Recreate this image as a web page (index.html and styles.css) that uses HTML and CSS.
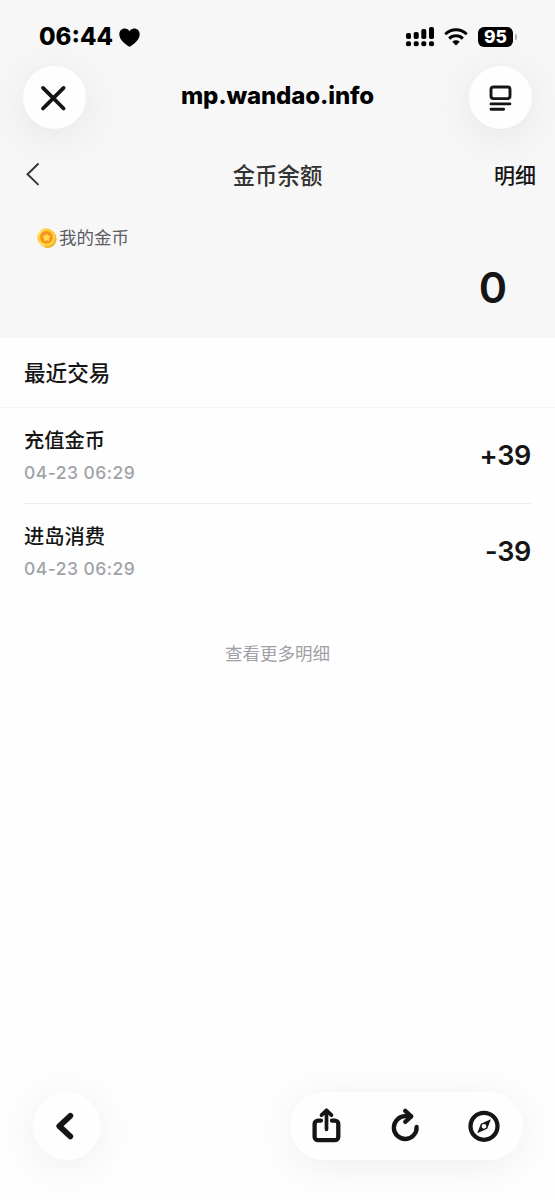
FILE: index.html
```html
<!DOCTYPE html>
<html lang="zh-CN">
<head>
    <meta charset="UTF-8" />
    <meta name="viewport" content="width=device-width, initial-scale=1" />
    <title>金币余额</title>
    <link rel="stylesheet" href="styles.css">
</head>
<body>

    <header class="top">
        <div class="status-bar">
            <div class="status-left">
                <span class="time">06:44</span>
                <svg class="heart" width="21" height="19" viewBox="0 0 21 19"><path d="M10.500 18.700C7 16.800.3 12 .3 6.200.3 2.700 2.700.4 5.600.4c2.100 0 3.900 1 4.900 2.800C11.500 1.400 13.300.4 15.400.4c2.900 0 5.300 2.300 5.300 5.800 0 5.800-6.700 10.600-10.200 12.500z"/></svg>
            </div>
            <div class="status-right">
                <svg class="signal" width="29" height="20" viewBox="0 0 29 20">
                    <rect x="0" y="6" width="5" height="6" rx="1.800"/>
                    <rect x="7.700" y="5" width="5" height="7" rx="1.800"/>
                    <rect x="15.300" y="2" width="5" height="10" rx="1.800"/>
                    <rect x="23" y="0" width="5" height="12" rx="1.800"/>
                    <rect x="0" y="14.200" width="5" height="5" rx="1.800"/>
                    <rect x="7.700" y="14.200" width="5" height="5" rx="1.800"/>
                    <rect x="15.300" y="14.200" width="5" height="5" rx="1.800"/>
                    <rect x="23" y="14.200" width="5" height="5" rx="1.800"/>
                </svg>
                <svg class="wifi" width="24" height="18" viewBox="0 0 24 18">
                    <path class="wifi-arc" d="M1.300 6.200a15.300 15.300 0 0 1 21.400 0M5.200 10.600a9.700 9.700 0 0 1 13.600 0"/>
                    <path d="M12 17.500 8.300 13.700a5.400 5.400 0 0 1 7.400 0z"/>
                </svg>
                <div class="battery"><span class="battery-level">95</span><span class="battery-tip"></span></div>
            </div>
        </div>

        <div class="browser-bar">
            <button class="round-btn">
                <svg width="28" height="26" viewBox="0 0 28 26"><path class="line close" d="M2 2.900l20.600 20.600M22.600 2.900 2 23.500"/></svg>
            </button>
            <span class="domain">mp.wandao.info</span>
            <button class="round-btn">
                <svg width="24" height="26" viewBox="0 0 24 26"><rect class="line page" x="3" y="2" width="19" height="11.600" rx="2.500"/><path class="line page" d="M3 18.900h18.900M3 24.300h12.600"/></svg>
            </button>
        </div>

        <div class="page-bar">
            <svg class="back" width="14" height="24" viewBox="0 0 14 24"><path d="M12.500 1.500 1.500 12.200l11 10.700"/></svg>
            <h1 class="page-title">金币余额</h1>
            <a class="detail">明细</a>
        </div>

        <section class="balance">
            <div class="balance-label">
                <svg class="coin" width="20" height="20" viewBox="0 0 20 20">
                    <circle cx="10.600" cy="10.900" r="9" fill="#e9ac1c"/>
                    <circle cx="9.400" cy="9.400" r="9.200" fill="#ffcf3a"/>
                    <circle cx="9.400" cy="9.200" r="6.300" fill="#f7931e"/>
                    <path d="M9.500 5.500l1.500 2 2.600.7-1.700 2.200.2 2.800-2.600-1-2.600 1 .2-2.800L5.400 8.200 8 7.500z" fill="#ffdc4e"/>
                    <path d="M2 14.500 7.500 18.500M1 7.500 5.500 1.300" stroke="#ffe88a" stroke-width="1.200" fill="none"/>
                </svg>
                <span>我的金币</span>
            </div>
            <div class="balance-value">0</div>
        </section>
    </header>

    <main class="records">
        <h2 class="records-title">最近交易</h2>
        <ul class="record-list">
            <li class="record">
                <div>
                    <div class="record-name">充值金币</div>
                    <div class="record-time">04-23 06:29</div>
                </div>
                <div class="record-amount">+39</div>
            </li>
            <li class="record">
                <div>
                    <div class="record-name">进岛消费</div>
                    <div class="record-time">04-23 06:29</div>
                </div>
                <div class="record-amount">-39</div>
            </li>
        </ul>
        <a class="more">查看更多明细</a>
    </main>

    <footer class="toolbar">
        <button class="tool-back">
            <svg width="22" height="28" viewBox="0 0 22 28"><path class="line bold" d="M14.300 3.800 3.300 14.100l11 10.300"/></svg>
        </button>
        <div class="tool-group">
            <svg width="28" height="36" viewBox="0 0 28 36">
                <path class="line tool" d="M8 12.600H5.100A3.500 3.500 0 0 0 1.600 16.100V28.700A3.500 3.500 0 0 0 5.100 32.200H21.800A3.500 3.500 0 0 0 25.300 28.700V16.100A3.500 3.500 0 0 0 21.800 12.600H18.900"/>
                <path class="line arrow" d="M13.500 21.300V2.500M8.500 7.100l5-4.900 5 4.900"/>
            </svg>
            <svg width="28" height="36" viewBox="0 0 28 36">
                <path class="line tool" d="M25.600 18.800A11.400 11.400 0 1 1 14.200 8.200H20"/>
                <path class="line tool" d="M14.200 2.900 20.300 8.300 14.200 13.900"/>
            </svg>
            <svg width="32" height="36" viewBox="0 0 32 36">
                <circle class="line tool" cx="16" cy="18.300" r="13.500"/>
                <path class="needle" fill-rule="evenodd" d="M22.900 11.200 19.200 20.700 9.200 25.200 12.900 15.700zM16 15.900a2.400 2.400 0 1 0 0 4.800 2.400 2.400 0 0 0 0-4.800z"/>
            </svg>
        </div>
    </footer>

</body>
</html>
```
FILE: styles.css
```css
* {
    box-sizing: border-box;
}
body {
    margin: 0;
    height: 1200px;
    display: flex;
    flex-direction: column;
    overflow: hidden;
    background: #fefefe;
    color: #151515;
    font-family: Inter, "Noto Sans CJK SC", sans-serif;
    font-weight: 500;
}
h1, h2, ul {
    margin: 0;
    padding: 0;
    font-weight: 500;
}
svg {
    display: block;
    flex: none;
    overflow: visible;
}
button {
    border: 0;
    padding: 0;
    display: flex;
    align-items: center;
    justify-content: center;
    border-radius: 50%;
    background: #fefefe;
}
.line {
    fill: none;
    stroke: #151515;
    stroke-linecap: round;
    stroke-linejoin: round;
}
.close {
    stroke-width: 3.8;
}
.page {
    stroke-width: 2.9;
}
.bold {
    stroke-width: 5.8;
}
.tool {
    stroke-width: 4.3;
}
.arrow {
    stroke-width: 3.7;
}

/* 顶部 */
.top {
    height: 338px;
    background: #f7f7f7;
    overflow: hidden;
}
.status-bar {
    height: 66px;
    padding: 8px 37px 0 39px;
    display: flex;
    align-items: center;
    justify-content: space-between;
    color: #000;
}
.status-left, .status-right {
    display: flex;
    align-items: center;
}
.time {
    font-size: 24px;
    font-weight: 800;
    line-height: 30px;
}
.heart {
    margin-left: 6px;
}
.wifi {
    margin-left: 9px;
}
.wifi-arc {
    fill: none;
    stroke: #000;
    stroke-width: 3;
}
.status-right {
    margin-right: 1px;
}
.battery {
    margin-left: 10px;
    display: flex;
    align-items: center;
}
.battery-level {
    width: 35px;
    height: 20px;
    border-radius: 6px;
    background: #000;
    color: #fff;
    font-size: 17.5px;
    font-weight: 800;
    line-height: 20px;
    text-align: center;
}
.battery-tip {
    width: 2px;
    height: 6px;
    margin-left: 2px;
    border-radius: 0 2px 2px 0;
    background: #b0b0b0;
}
.browser-bar {
    height: 63px;
    padding: 0 23px;
    display: flex;
    justify-content: space-between;
}
.round-btn {
    width: 63px;
    height: 63px;
    box-shadow: 0 8px 44px rgba(0, 0, 0, 0.08);
}
.domain {
    color: #000;
    font-size: 24px;
    font-weight: 800;
    line-height: 60px;
    letter-spacing: -0.15px;
}
.page-bar {
    height: 90px;
    padding: 0 19px 0 26px;
    display: grid;
    grid-template-columns: 64px 1fr 71px;
    align-items: center;
}
.back {
    fill: none;
    stroke: #333;
    stroke-width: 1.9;
}
.page-title {
    font-size: 22.4px;
    color: #333;
    text-align: center;
}
.detail {
    font-size: 21px;
    text-align: right;
}
.balance {
    padding: 6px 48px 0 37px;
}
.balance-label {
    display: flex;
    align-items: center;
    gap: 2px;
    height: 26px;
    font-size: 17.5px;
    line-height: 22px;
    font-weight: 400;
    color: #5d5d66;
}
.balance-label span {
    padding-bottom: 1px;
}
.balance-value {
    height: 72px;
    line-height: 72px;
    text-align: right;
    font-size: 43px;
    font-weight: 600;
}

/* 交易记录 */
.records {
    flex: 1;
    text-align: center;
}
.records-title {
    height: 70px;
    padding: 0 24px;
    line-height: 70px;
    font-size: 21.6px;
    text-align: left;
    border-bottom: 1px solid #f4f4f4;
}
.record-list {
    padding: 0 24px;
    list-style: none;
    text-align: left;
}
.record {
    height: 96px;
    padding-top: 2px;
    display: flex;
    align-items: center;
    justify-content: space-between;
    border-bottom: 1px solid #ededed;
}
.record:last-child {
    border-bottom-color: transparent;
}
.record-name {
    font-size: 20.3px;
    line-height: 32px;
}
.record-time {
    font-size: 17.5px;
    line-height: 32px;
    letter-spacing: 0.45px;
    color: #a0a3a8;
}
.record-amount {
    padding-bottom: 2px;
    font-size: 27px;
    font-weight: 600;
    letter-spacing: -0.3px;
}
.more {
    display: block;
    margin-top: 40px;
    line-height: 28px;
    font-size: 17.5px;
    font-weight: 400;
    color: #a0a0a8;
}

/* 底部工具栏 */
.toolbar {
    height: 108px;
    padding: 0 32px 0 33px;
    display: flex;
    justify-content: space-between;
}
.tool-back, .tool-group {
    height: 68px;
    box-shadow: 0 6px 44px rgba(0, 0, 0, 0.07);
}
.tool-back {
    width: 68px;
}
.tool-group {
    width: 233px;
    padding: 0 23px;
    display: flex;
    align-items: center;
    justify-content: space-between;
    border-radius: 34px;
    background: #fefefe;
}
.needle {
    fill: #151515;
}
```
